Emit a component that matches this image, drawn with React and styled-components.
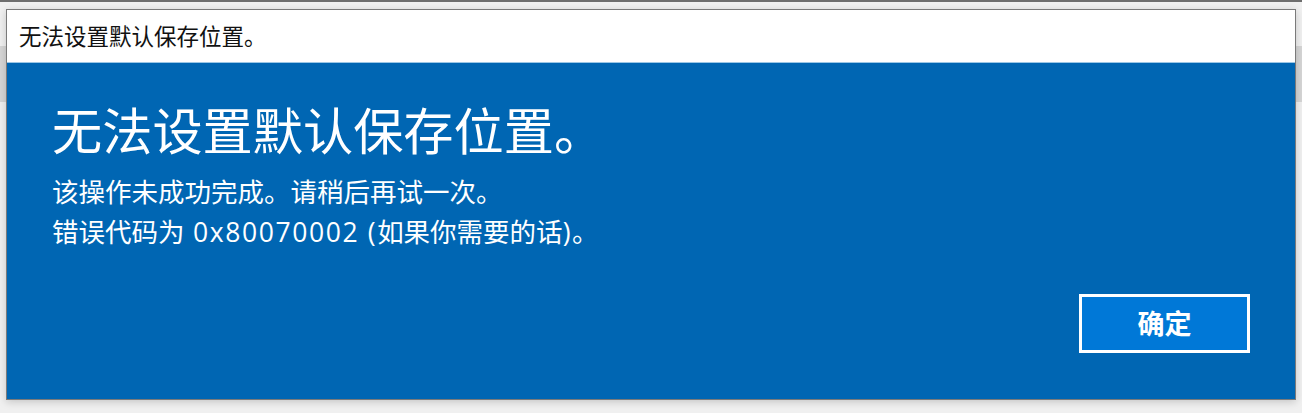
import React from "react";
import styled, { createGlobalStyle } from "styled-components";

const Global = createGlobalStyle`
  html, body { margin: 0; padding: 0; }
  body {
    background: #f0f0f0;
    width: 1302px;
    height: 413px;
    overflow: hidden;
    font-family: "Open Sans", "Noto Sans CJK SC", sans-serif;
  }
`;

const Desktop = styled.div`
  width: 1302px;
  height: 413px;
  box-sizing: border-box;
  border-top: 2px solid #6e6e6e;
  padding: 7px 6px 0 6px;
  background: linear-gradient(to bottom, #f0f0f0 0, #f0f0f0 44px, #d6d6d6 44px, #d6d6d6 100px, #f0f0f0 100px);
`;

const Window = styled.div`
  width: 1290px;
  height: 391px;
  box-sizing: border-box;
  border: 1px solid #7a7a7a;
  display: flex;
  flex-direction: column;
  background: #0066b3;
  box-shadow: 0 2px 8px rgba(0, 0, 0, 0.18);
`;

const TitleBar = styled.div`
  height: 53px;
  flex: none;
  background: #ffffff;
  border-bottom: 1px solid #9cc7e6;
  display: flex;
  align-items: center;
  padding-left: 12px;
  font-size: 22.5px;
  color: #111;
  padding-bottom: 2px;
  box-sizing: border-box;
`;

const Body = styled.div`
  flex: 1;
  display: flex;
  flex-direction: column;
  padding: 38px 45px 46px 45px;
  color: #ffffff;
`;

const Heading = styled.h1`
  margin: 0;
  font-weight: 400;
  font-size: 50.2px;
  line-height: 60px;
`;

const Message = styled.p`
  margin: 11px 0 0 0;
  font-size: 26.5px;
  line-height: 40px;
`;

const Code = styled.span`
  letter-spacing: 1.6px;
`;

const Footer = styled.div`
  margin-top: auto;
  display: flex;
  justify-content: flex-end;
`;

const OkButton = styled.button`
  width: 171px;
  height: 59px;
  box-sizing: border-box;
  border: 3px solid #ffffff;
  background: #0078d7;
  color: #ffffff;
  font-family: "Noto Sans CJK SC", sans-serif;
  font-weight: 700;
  font-size: 27px;
  line-height: 1;
  padding: 0 0 2px 0;
  cursor: pointer;
`;

export default function App() {
  return (
    <>
      <Global />
      <Desktop>
        <Window>
          <TitleBar>无法设置默认保存位置。</TitleBar>
          <Body>
            <Heading>无法设置默认保存位置。</Heading>
            <Message>
              该操作未成功完成。请稍后再试一次。
              <br />
              错误代码为<Code> 0x80070002 (</Code>如果你需要的话<Code>)</Code>。
            </Message>
            <Footer>
              <OkButton>确定</OkButton>
            </Footer>
          </Body>
        </Window>
      </Desktop>
    </>
  );
}
